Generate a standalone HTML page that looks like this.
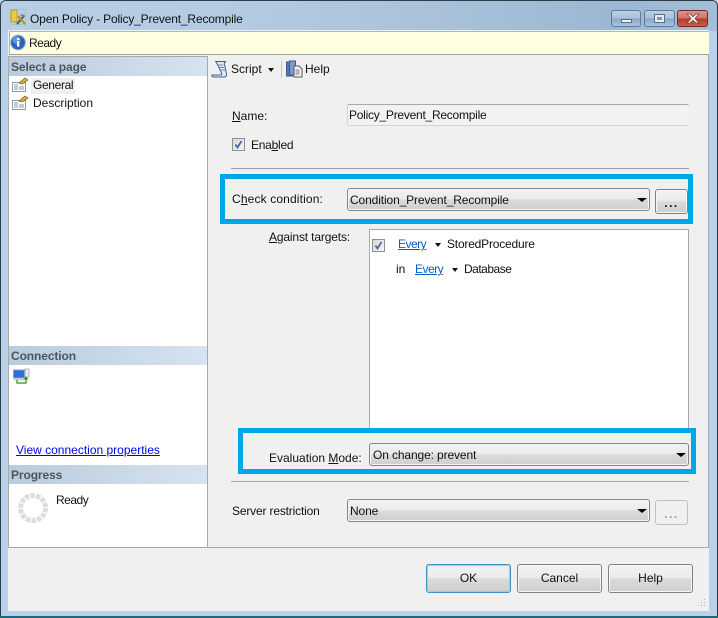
<!DOCTYPE html>
<html><head><meta charset="utf-8">
<style>
html,body{margin:0;padding:0;background:#fff}
#w{position:relative;width:718px;height:618px;overflow:hidden;font:12px "Liberation Sans",sans-serif;color:#111;background:#b9d1ea}
.a{position:absolute}
.t{position:absolute;white-space:nowrap;line-height:14px;height:14px}
.hd{position:absolute;left:9px;width:198px;height:19px;background:linear-gradient(90deg,#b9cbdc,#d6e3f0);font-weight:bold;color:#4a5560;line-height:21px;text-indent:2px;font-size:12px;letter-spacing:-.1px}
.cb{position:absolute;box-sizing:border-box;border:1px solid #868686;border-radius:3px;height:23px;background:linear-gradient(#f2f2f2 0,#ebebeb 46%,#dadada 52%,#cfcfcf 100%);box-shadow:inset 0 0 0 1px #f4f4f4}
.cb i{position:absolute;right:2px;top:9px;width:0;height:0;border:4px solid transparent;border-top:4px solid #000;border-bottom:0;border-left-width:5px;border-right-width:5px}
.cb span{position:absolute;left:2px;top:4px;line-height:14px;white-space:nowrap;letter-spacing:-.12px}
.btn{position:absolute;box-sizing:border-box;border:1px solid #808080;border-radius:3px;background:linear-gradient(#f2f2f2 0,#ebebeb 46%,#dadada 52%,#cfcfcf 100%);box-shadow:inset 0 0 0 1px #f6f6f6;text-align:center;line-height:27px}
.hl{position:absolute;box-sizing:border-box;border:5px solid #00a7e8;background:#f0f0f0}
.sep{position:absolute;height:1px;background:#a0a0a0}
.chk{position:absolute;box-sizing:border-box;width:13px;height:13px;border:1px solid #8e8f8f;background:linear-gradient(135deg,#d8d8d8,#f4f4f4)}
a{color:#0000f0}
</style></head><body>
<div id="w">
<!-- window frame -->
<div class="a" style="left:0;top:0;width:718px;height:618px;box-sizing:border-box;border:1px solid #2d3c48;border-radius:6px 6px 0 0;background:#b9d1ea"></div>
<div class="a" style="left:1px;top:1px;width:716px;height:30px;border-radius:5px 5px 0 0;background:linear-gradient(90deg,#b7cee4 0,#b4cce3 30%,#a9c2da 60%,#9db7d2 85%,#a4bdd7 100%)"></div>
<div class="a" style="left:1px;top:611px;width:716px;height:5px;background:#b9d1ea"></div>
<div class="a" style="left:0;top:616px;width:718px;height:2px;background:#1d6b78"></div>
<!-- title -->
<svg class="a" style="left:9px;top:8px" width="18" height="19" viewBox="0 0 18 19">
<rect x="2" y="2" width="6" height="12" rx="1.500" fill="#ecc64f" stroke="#b58a1c" stroke-width=".7"/>
<rect x="1.500" y="1.500" width="15" height="15" fill="none" stroke="#7bbf58" stroke-dasharray="1 2" stroke-width="1"/>
<path d="M8 16l7-8" stroke="#555" stroke-width="2"/><path d="M9 8l7 8" stroke="#b58a2a" stroke-width="2"/><path d="M11 6l5 1-2 3z" fill="#777"/>
</svg>
<div class="t" style="left:30px;top:12px;color:#111;letter-spacing:-.16px">Open Policy - Policy_Prevent_Recompile</div>
<!-- window buttons -->
<div class="a" style="left:611px;top:10px;width:30px;height:17px;box-sizing:border-box;border:1px solid #5f7b97;border-radius:3px;background:linear-gradient(#bdd0e3 0,#a9c0d8 48%,#8aa6c4 52%,#a8c3dc 100%)"></div>
<div class="a" style="left:621px;top:19px;width:11px;height:4px;background:#eef3f8;border:1px solid #5b7086;box-sizing:border-box"></div>
<div class="a" style="left:644px;top:10px;width:31px;height:17px;box-sizing:border-box;border:1px solid #5f7b97;border-radius:3px;background:linear-gradient(#bdd0e3 0,#a9c0d8 48%,#8aa6c4 52%,#a8c3dc 100%)"></div>
<div class="a" style="left:654px;top:14px;width:11px;height:9px;box-sizing:border-box;border:3px solid #e6ecf2;outline:1px solid #5b7086;outline-offset:-1px;background:#7f97ae"></div>
<div class="a" style="left:677px;top:10px;width:31px;height:17px;box-sizing:border-box;border:1px solid #6b2b2b;border-radius:3px;background:linear-gradient(#dd9289 0,#d0776c 48%,#b53a2a 52%,#c8604f 100%)"></div>
<svg class="a" style="left:685px;top:13px" width="16" height="11" viewBox="0 0 16 11"><path d="M2 1h3l3 2.600L11 1h3l-4 4.500L14 10h-3L8 7.400 5 10H2l4-4.500z" fill="#eee" stroke="#7a3a34" stroke-width=".7"/></svg>
<!-- client -->
<div class="a" style="left:8px;top:30px;width:701px;height:581px;background:#f0f0f0"></div>
<div class="a" style="left:708px;top:31px;width:1px;height:517px;background:#a8a8a8"></div>
<div class="a" style="left:8px;top:547px;width:701px;height:1px;background:#a8a8a8"></div>
<!-- ready bar -->
<div class="a" style="left:9px;top:31px;width:700px;height:24px;background:#ffffe1;box-sizing:border-box;border:1px solid #a9b8c4;border-bottom:1px solid #a0a0a0;border-width:1px 0 1px 1px"></div>
<svg class="a" style="left:10px;top:34px" width="16" height="17" viewBox="0 0 16 17"><circle cx="8" cy="8.500" r="7.300" fill="#2a62b8" stroke="#8ea6c6"/><circle cx="6.500" cy="6" r="4" fill="#5f94dc"/><rect x="7" y="7" width="2.400" height="5.600" fill="#fff"/><rect x="7" y="4" width="2.400" height="2" fill="#fff"/></svg>
<div class="t" style="left:29px;top:36px;letter-spacing:-.5px">Ready</div>
<!-- left panel -->
<div class="a" style="left:8px;top:56px;width:200px;height:492px;box-sizing:border-box;border:1px solid #a8a8a8;background:#fff"></div>
<div class="hd" style="top:57px">Select a page</div>
<div class="a" style="left:31px;top:78px;width:44px;height:16px;background:#f0f0f0"></div>
<svg class="a" style="left:12px;top:77px" width="17" height="15" viewBox="0 0 17 15"><rect x=".5" y="5.500" width="13" height="9" fill="#fff" stroke="#8a9bb0"/><path d="M2 8h4M2 10h4M2 12h4M7 10h5M7 12h5" stroke="#8296b0"/><path d="M7 6l6-5 3 2-6 4z" fill="#e2b42e" stroke="#5f4a12" stroke-width=".6"/></svg>
<svg class="a" style="left:12px;top:95px" width="17" height="15" viewBox="0 0 17 15"><rect x=".5" y="5.500" width="13" height="9" fill="#fff" stroke="#8a9bb0"/><path d="M2 8h4M2 10h4M2 12h4M7 10h5M7 12h5" stroke="#8296b0"/><path d="M7 6l6-5 3 2-6 4z" fill="#e2b42e" stroke="#5f4a12" stroke-width=".6"/></svg>
<div class="t" style="left:33px;top:78px;letter-spacing:-.35px">General</div>
<div class="t" style="left:33px;top:96px">Description</div>
<div class="hd" style="top:346px">Connection</div>
<svg class="a" style="left:13px;top:368px" width="17" height="17" viewBox="0 0 17 17"><rect x=".5" y="2" width="11" height="8" fill="#2a6ee0" stroke="#8fa0b4"/><rect x="1" y="10" width="10" height="2.500" fill="#c2cbd6"/><rect x="12" y="1" width="4" height="8" fill="#e8edf3" stroke="#8fa0b4" stroke-width=".7"/><path d="M4 12v3h9v-4" fill="none" stroke="#2f8a10" stroke-width="1.200"/><path d="M10.500 11.500h5L13 8.500z" fill="#2f8a10"/></svg>
<div class="t" style="left:16px;top:443px"><a href="#">View connection properties</a></div>
<div class="hd" style="top:465px">Progress</div>
<svg class="a" style="left:18px;top:493px" width="30" height="30" viewBox="0 0 30 30"><circle cx="15" cy="15" r="12.500" fill="none" stroke="#dcdcdc" stroke-width="5" stroke-dasharray="4.300 1.300"/></svg>
<div class="t" style="left:56px;top:493px;letter-spacing:-.5px">Ready</div>
<!-- toolbar -->
<svg class="a" style="left:211px;top:60px" width="18" height="18" viewBox="0 0 18 18"><path d="M4 1.500h11c-2 1-2 3-1 5l1.500 7.500c.5 2-1 3-2 3H3c-1.500 0-2.500-1-2-2h9c1 0 1-1 .5-2L6 3.500C5.500 2 5 1.500 4 1.500z" fill="#dfe8f3" stroke="#41608c"/><path d="M7 5h5M8 7.500h5M9 10h5" stroke="#6b87ad"/></svg>
<div class="t" style="left:231px;top:62px">Script</div>
<div class="a" style="left:268px;top:68px;width:0;height:0;border:3.500px solid transparent;border-top:4px solid #111;border-bottom:0"></div>
<div class="a" style="left:281px;top:61px;width:1px;height:17px;background:#c4c4c4"></div>
<svg class="a" style="left:285px;top:60px" width="18" height="18" viewBox="0 0 18 18"><rect x="1.500" y="2" width="6" height="14" fill="#5277b4" stroke="#3a5a92"/><rect x="4.500" y="1" width="6" height="14" fill="#7d9bcc" stroke="#3a5a92"/><path d="M9 6h5l3 3v8H9z" fill="#f5f5f5" stroke="#555"/><path d="M10.500 10h4M10.500 12h4M10.500 14h4" stroke="#777"/></svg>
<div class="t" style="left:305px;top:62px">Help</div>
<!-- name -->
<div class="t" style="left:232px;top:109px"><u>N</u>ame:</div>
<div class="a" style="left:347px;top:104px;width:342px;height:22px;box-sizing:border-box;border:1px solid #d5d5d5;border-top:1px solid #a8a8a8;border-right:0;border-radius:2px;background:#f2f2f2"></div>
<div class="t" style="left:349px;top:108px;letter-spacing:-.25px">Policy_Prevent_Recompile</div>
<div class="chk" style="left:232px;top:138px"></div>
<svg class="a" style="left:232px;top:138px" width="13" height="13" viewBox="0 0 13 13"><path d="M3.500 6.500l2 3L9.500 3" fill="none" stroke="#4a63a8" stroke-width="1.700"/></svg>
<div class="t" style="left:251px;top:138px;letter-spacing:-.25px">Ena<u>b</u>led</div>
<div class="sep" style="left:231px;top:168px;width:458px"></div>
<!-- targets box -->
<div class="a" style="left:369px;top:229px;width:320px;height:200px;box-sizing:border-box;border:1px solid #a8a8a8;background:#fff"></div>
<!-- check condition -->
<div class="hl" style="left:220px;top:174px;width:473px;height:50px"></div>
<div class="t" style="left:232px;top:192px;letter-spacing:.14px">C<u>h</u>eck condition:</div>
<div class="cb" style="left:347px;top:188px;width:303px"><span>Condition_Prevent_Recompile</span><i></i></div>
<div class="btn" style="left:655px;top:189px;width:33px;height:25px;line-height:26px;font-weight:bold;letter-spacing:1.500px">...</div>
<div class="t" style="left:269px;top:230px;letter-spacing:-.15px"><u>A</u>gainst targets:</div>
<div class="chk" style="left:372px;top:239px"></div>
<svg class="a" style="left:372px;top:239px" width="13" height="13" viewBox="0 0 13 13"><path d="M3.500 6.500l2 3L9.500 3" fill="none" stroke="#4a63a8" stroke-width="1.700"/></svg>
<div class="t" style="left:398px;top:237px;letter-spacing:-.5px"><a href="#" style="color:#0a5cc0">Every</a></div>
<div class="a" style="left:435px;top:243px;width:0;height:0;border:3.500px solid transparent;border-top:4px solid #111;border-bottom:0"></div>
<div class="t" style="left:447px;top:237px;letter-spacing:-.2px">StoredProcedure</div>
<div class="t" style="left:396px;top:262px">in</div>
<div class="t" style="left:415px;top:262px;letter-spacing:-.5px"><a href="#" style="color:#0a5cc0">Every</a></div>
<div class="a" style="left:452px;top:268px;width:0;height:0;border:3.500px solid transparent;border-top:4px solid #111;border-bottom:0"></div>
<div class="t" style="left:464px;top:262px;letter-spacing:-.5px">Database</div>
<!-- evaluation -->
<div class="hl" style="left:238px;top:428px;width:458px;height:46px"></div>
<div class="t" style="left:269px;top:451px">Evaluation <u>M</u>ode:</div>
<div class="cb" style="left:369px;top:443px;width:320px"><span style="left:3px">On change: prevent</span><i></i></div>
<div class="sep" style="left:231px;top:481px;width:458px;background:#a8a8a8"></div>
<div class="t" style="left:232px;top:504px;letter-spacing:-.17px">Server restriction</div>
<div class="cb" style="left:347px;top:499px;width:303px"><span>None</span><i></i></div>
<div class="btn" style="left:655px;top:500px;width:33px;height:25px;line-height:26px;border-color:#c0c0c0;background:#f0f0f0;box-shadow:none;color:#9a9a9a;font-weight:bold;letter-spacing:1.500px">...</div>
<!-- bottom -->
<div class="btn" style="left:426px;top:564px;width:85px;height:29px;border-color:#3c93c6;box-shadow:inset 0 0 0 1px #8fd3f2">OK</div>
<div class="btn" style="left:517px;top:564px;width:85px;height:29px">Cancel</div>
<div class="btn" style="left:608px;top:564px;width:85px;height:29px">Help</div>
<svg class="a" style="left:696px;top:598px" width="11" height="11" viewBox="0 0 11 11"><path d="M8 1h1v1H8zM5 4h1v1H5zM8 4h1v1H8zM2 7h1v1H2zM5 7h1v1H5zM8 7h1v1H8z" fill="#b0b0b0"/></svg>
</div>
</body></html>
